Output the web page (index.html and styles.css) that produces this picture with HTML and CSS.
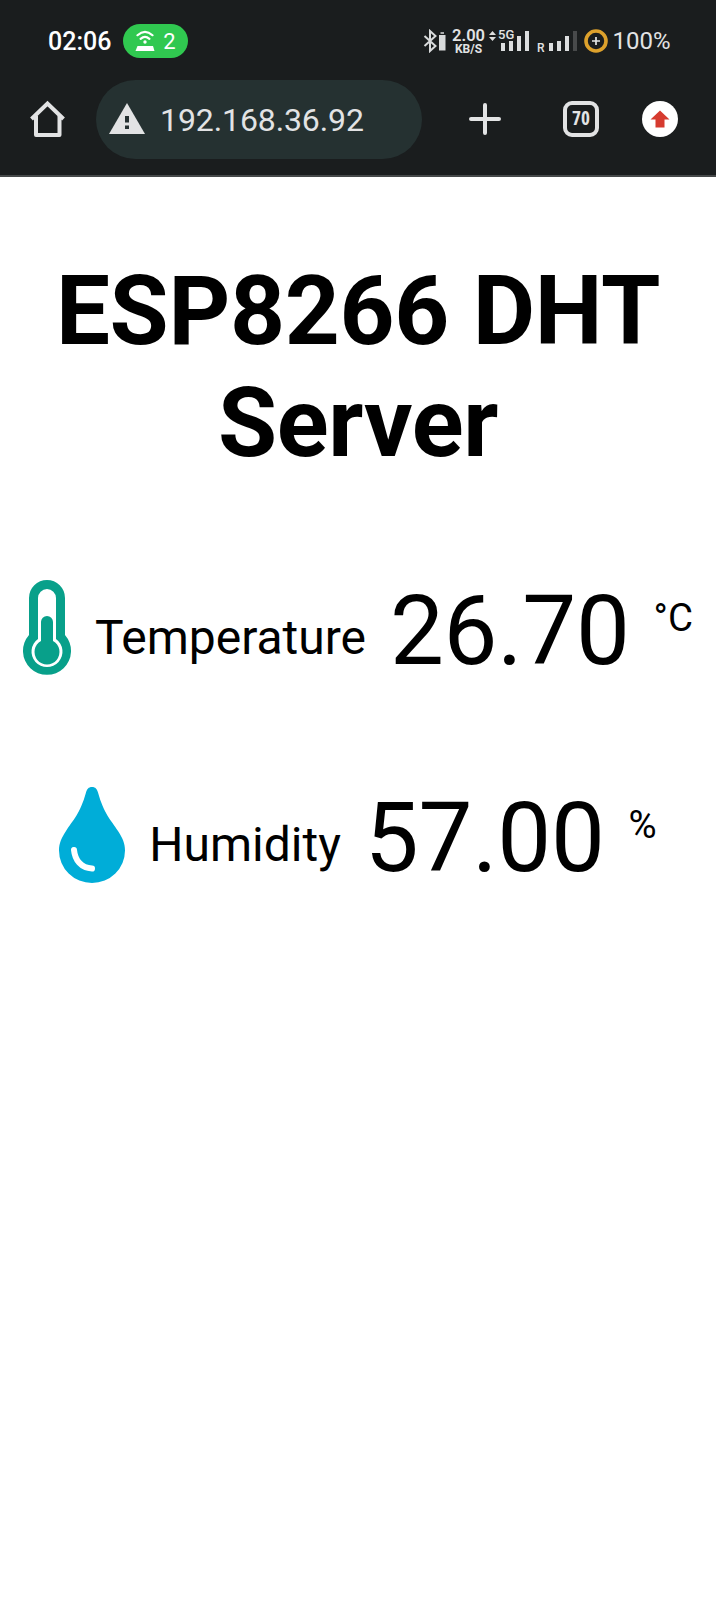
FILE: index.html
```
<!DOCTYPE html>
<html lang="en">
<head>
<meta charset="utf-8">
<title>ESP8266 DHT Server</title>
<link rel="stylesheet" href="styles.css">
</head>
<body>
<header class="chrome">
  <div class="status">
    <span class="clock">02:06</span>
    <span class="hotspot">
      <svg width="20" height="22" viewBox="0 0 20 22" fill="none" stroke="#fff" stroke-width="2.2" stroke-linecap="round"><path d="M2.5 5.2Q10-1.6 17.500 5.200M5.600 8.800Q10 5 14.400 8.800"/><circle cx="10" cy="12" r="1.700" fill="#fff" stroke="none"/><path d="M2.500 16h15.500l1.500 5H.500z" fill="#fff" stroke="none"/></svg>
      <span>2</span>
    </span>
    <svg class="bt" width="23" height="24" viewBox="0 0 23 24" fill="none" stroke="#d8dadb" stroke-width="2"><path d="M1.500 7 12.500 17 7 22V2l5.500 5L1.500 17"/><path d="M16 6h6.500V21.500h-6.500z" fill="#d8dadb" stroke="none"/><path d="M17.500 4h3.500" stroke-width="1.500"/></svg>
    <span class="speed"><b>2.00</b><small>KB/S</small></span>
    <span class="cell">
      <svg width="40" height="24" viewBox="0 0 40 24" fill="#dcdedf"><path d="M0 6 3.500 2 7 6zM0 8H7L3.500 12z"/><path d="M12 14h4v8h-4zM20 12h4v10h-4zM28 7h4v15h-4zM36 2h4v20h-4z"/></svg>
      <i>5G</i>
    </span>
    <span class="roam">R</span>
    <svg class="bars" width="30" height="22" viewBox="0 0 30 22" fill="#dcdedf"><path d="M1 13h4v8H1zM9 11h4v10H9zM17 6h4v15h-4z"/><path d="M25 1h4v20h-4z" fill="#484a4b"/></svg>
    <svg class="saver" width="24" height="24" viewBox="0 0 24 24" fill="none"><circle cx="12" cy="12" r="10" stroke="#dda12c" stroke-width="3.600"/><path d="M12 8v8M8 12h8" stroke="#e4e6e7" stroke-width="1.700"/></svg>
    <span class="battery">100%</span>
  </div>
  <div class="toolbar">
    <svg class="home" width="36" height="38" viewBox="0 0 36 38" fill="none" stroke="#e2e3e4" stroke-width="4" stroke-linejoin="round"><path d="M1.500 19 17.500 3.500 33.500 19" stroke-linejoin="miter"/><path d="M6 16V35H29.500V16"/></svg>
    <div class="address">
      <svg width="36" height="31" viewBox="0 0 36 31"><path d="M18 0 36 31H0z" fill="#e2e3e4"/><path d="M16 13h4v6.500h-4zM16 22.500h4v3.500h-4z" fill="#253131"/></svg>
      <span>192.168.36.92</span>
    </div>
    <svg class="plus" width="32" height="32" viewBox="0 0 32 32" stroke="#e2e3e4" stroke-width="4" stroke-linecap="round"><path d="M16 2v28M2 16h28"/></svg>
    <span class="tabs">70</span>
    <svg class="update" width="36" height="36" viewBox="0 0 36 36"><circle cx="18" cy="18" r="18" fill="#fff"/><path d="M18 9.500 27.500 18.500H22.500V26.500H13.500V18.500H8.500z" fill="#d63b2f"/></svg>
  </div>
</header>
<main>
  <h2>ESP8266 DHT Server</h2>
  <p>
    <svg class="icon" width="48" height="96" viewBox="0 0 48 96" fill="#08a08a"><path d="M24 0A18 18 0 0 0 6 18V55A24 24 0 1 0 42 55V18A18 18 0 0 0 24 0Z"/><path d="M24 9A9 9 0 0 0 15 18V59A15.500 15.500 0 1 0 33 59V18A9 9 0 0 0 24 9Z" fill="#fff"/><path d="M24 36A6 6 0 0 0 18 42V61A12.500 12.500 0 1 0 30 61V42A6 6 0 0 0 24 36Z"/></svg>
    <span class="label">Temperature</span>
    <span class="value">26.70</span>
    <sup>°C</sup>
  </p>
  <p class="humidity">
    <svg class="icon" width="66" height="96" viewBox="0 0 66 96"><path d="M33 0C29.500 0 28 2.200 27 5.500C21 27 14 33 7 44C2.500 51 0 56 0 63.500A33 32.500 0 0 0 66 63.500C66 56 63.500 51 59 44C52 33 45 27 39 5.500C38 2.200 36.500 0 33 0Z" fill="#00add8"/><path d="M15 63C16 73 22 81 33 81.500" fill="none" stroke="#fff" stroke-width="6" stroke-linecap="round"/></svg>
    <span class="label">Humidity</span>
    <span class="value">57.00</span>
    <sup>%</sup>
  </p>
</main>
</body>
</html>
```
FILE: styles.css
```
body {
  margin: 0;
  background: #fff;
  color: #000;
  font-family: Roboto, sans-serif;
}
.chrome {
  box-sizing: border-box;
  height: 177px;
  background: #1a1d1e;
  border-bottom: 2px solid #454849;
  color: #e2e3e4;
}
.status {
  display: flex;
  align-items: center;
  height: 80px;
  padding: 2px 0 0 48px;
  box-sizing: border-box;
}
.clock {
  width: 75px;
  font: 500 25px Roboto, sans-serif;
  color: #fff;
}
.hotspot {
  display: flex;
  align-items: center;
  justify-content: center;
  gap: 8px;
  width: 65px;
  height: 34px;
  border-radius: 17px;
  background: #30c850;
  color: #fff;
  font-size: 22px;
}
.bt { margin-left: 235px; }
.speed {
  display: flex;
  flex-direction: column;
  align-items: center;
  width: 35px;
  margin-left: 5px;
  padding-top: 1px;
}
.speed b { font-size: 16.5px; font-weight: 600; line-height: 15px; }
.speed small { font-size: 12px; font-weight: 700; line-height: 12px; }
.cell {
  position: relative;
  display: flex;
  margin-left: 3px;
}
.cell i {
  position: absolute;
  left: 9px;
  top: 0;
  background: #1a1d1e;
  font: 500 13px/12px Roboto, sans-serif;
}
.roam { margin: 13px 3px 0 8px; font-size: 12px; font-weight: 500; }
.saver { margin-left: 6px; }
.battery { margin-left: 5px; font-size: 24px; }
.toolbar {
  display: flex;
  align-items: center;
  height: 79px;
}
.home { margin: 0 0 1px 30px; }
.address {
  display: flex;
  align-items: center;
  gap: 15px;
  box-sizing: border-box;
  width: 326px;
  height: 79px;
  margin-left: 30px;
  padding-left: 13px;
  border-radius: 40px;
  background: #253131;
  font-size: 32px;
  letter-spacing: -0.1px;
}
.address svg { margin-bottom: 3px; }
.plus { margin: 0 0 1px 47px; }
.tabs {
  box-sizing: border-box;
  width: 36px;
  height: 36px;
  margin: 0 0 1px 62px;
  border: 4px solid #e2e3e4;
  border-radius: 9px;
  font: bold 19px/27px "Open Sans", sans-serif;
  font-stretch: condensed;
  text-align: center;
}
.update { margin: 0 0 1px 43px; }
main {
  display: flow-root;
  margin-top: -2px;
  text-align: center;
}
h2 {
  margin: 80px 0 0;
  font-size: 96px;
  line-height: 112px;
  letter-spacing: -0.3px;
}
p {
  height: 112px;
  margin: 96px 0 0;
  font-size: 96px;
  line-height: 112px;
  white-space: nowrap;
}
.humidity { margin-top: 95px; }
.icon { vertical-align: -12px; }
.label {
  font-size: 48px;
  line-height: 56px;
  vertical-align: 10px;
}
.value { letter-spacing: -0.25px; }
sup {
  font-size: 38.4px;
  line-height: 45px;
  vertical-align: super;
}
```
